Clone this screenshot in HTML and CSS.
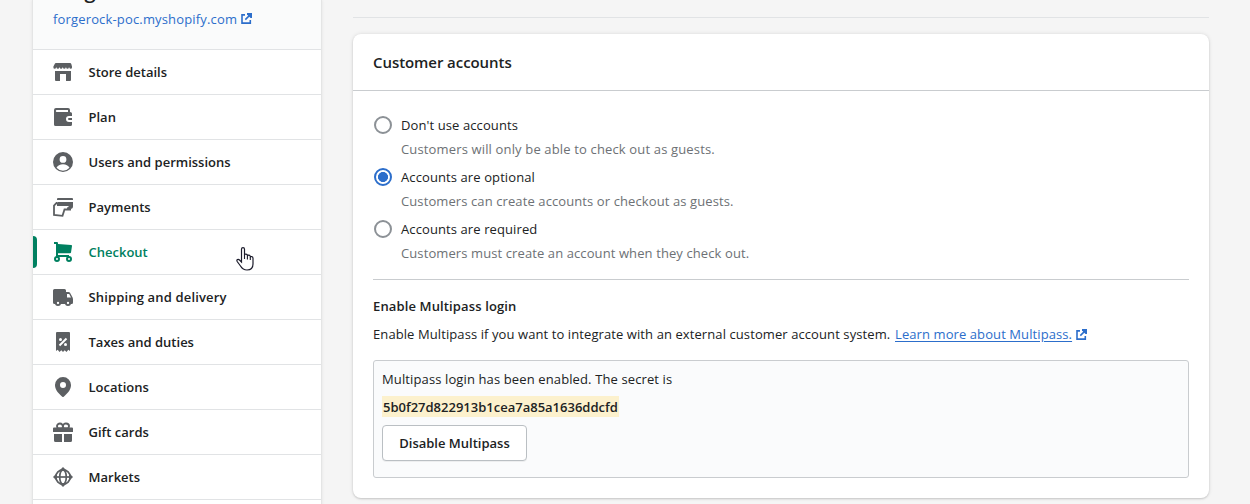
FILE: index.html
```html
<!DOCTYPE html>
<html lang="en">
<head>
<meta charset="utf-8">
<title>Settings - Checkout</title>
<link rel="stylesheet" href="styles.css">
</head>
<body>
<svg class="defs" width="0" height="0">
  <symbol id="external" viewBox="0 0 11 11"><path d="M4 1.900H1v8.200h8.300V7M9.700 1.200 4.300 6.600" fill="none" stroke="currentColor" stroke-width="1.600"/><path d="M6 0h5v5H9.500L6 1.500z" fill="currentColor"/></symbol>
</svg>
<div class="page">
  <aside class="sidebar">
    <header class="store">
      <div class="store-name">Forgerock</div>
      <a class="store-link">forgerock-poc.myshopify.com</a><svg class="external"><use href="#external"/></svg>
    </header>
    <nav class="nav">
      <a class="item"><svg class="icon" viewBox="0 0 20 20"><path d="M3 1h14q1 0 1.300 1L19 4.500v1a1.300 1.300 0 0 1-2.600 0h-.6a1.300 1.300 0 0 1-2.600 0h-.6a1.300 1.300 0 0 1-2.600 0h-.6a1.300 1.300 0 0 1-2.600 0h-.6a1.300 1.300 0 0 1-2.600 0h-.6a1.300 1.300 0 0 1-2.600 0v-1L1.700 2Q2 1 3 1z"/><path d="M2 9h16v9q0 1-1 1h-4v-7H7v7H3q-1 0-1-1z"/></svg><span>Store details</span></a>
      <a class="item"><svg class="icon" viewBox="0 0 20 20"><path fill-rule="evenodd" d="M3 1h12q2 0 2 2v2q2 0 2 1.500V9h-3q-3 0-3 3t3 3h3v2.500q0 1.500-1.500 1.500h-15Q1 19 1 17.500V3q0-2 2-2zM3.800 3a1 1 0 0 0 0 2H15V3z"/><path d="M16 11h3v2h-3a1 1 0 0 1 0-2z"/></svg><span>Plan</span></a>
      <a class="item"><svg class="icon" viewBox="0 0 20 20"><path fill-rule="evenodd" d="M10 0a10 10 0 1 1 0 20 10 10 0 0 1 0-20zm0 4a3.400 3.400 0 1 0 0 6.800A3.400 3.400 0 0 0 10 4zm0 8.300c-3 0-5.300 1.400-6.500 3.500a8.700 8.700 0 0 0 13 0c-1.200-2.100-3.500-3.500-6.500-3.500z"/></svg><span>Users and permissions</span></a>
      <a class="item"><svg class="icon" viewBox="0 0 20 20"><path d="M4 2q0-1 1-1h14q1 0 1 1v1H4zM5 5h15v4.500q0 2-1.500 2.300l-4.500.7v-2l1.500-.5V9H4V6z"/><path d="M4.500 6H3.500L1 8.500V18l8.500.8 2-6.300H18" fill="none" stroke="currentColor" stroke-width="1.800"/></svg><span>Payments</span></a>
      <a class="item active"><svg class="icon" viewBox="0 0 20 20"><path d="M1 0h3q1 0 1 1v1l13.200 1q.9 0 .8 1l-1 6.500q-.1.800-1 .800H5V13h11v2H3V2H1z"/><g fill="none" stroke="currentColor" stroke-width="2"><circle cx="4" cy="17" r="2"/><circle cx="16" cy="17" r="2"/></g></svg><span>Checkout</span></a>
      <a class="item wide"><svg class="icon" viewBox="0 0 20 20"><path fill-rule="evenodd" d="M1.500 2h10Q13 2 13 3.500V5h2.500q1 0 1.500.8l2.600 4.700.4 1.500v3.500q0 1.500-1.300 1.500H1.500Q0 17 0 15.500v-12Q0 2 1.500 2zM14 7v3.500h4L16.200 7z"/><g fill="#fff" stroke="currentColor" stroke-width="1.900"><circle cx="5" cy="16" r="2.100"/><circle cx="15" cy="16" r="2.100"/></g></svg><span>Shipping and delivery</span></a>
      <a class="item"><svg class="icon" viewBox="0 0 20 20"><path d="M4 0h12q1 0 1 1v18l-1.700-1.200L13.500 20l-1.800-1.800L10 20l-1.700-1.800L6.500 20l-1.800-2.200L3 19V1q0-1 1-1z"/><path d="m6.500 13.500 7-7" stroke="#fff" stroke-width="2"/><g fill="#fff"><circle cx="7.500" cy="7.500" r="1.500"/><circle cx="12.500" cy="12.500" r="1.500"/></g></svg><span>Taxes and duties</span></a>
      <a class="item"><svg class="icon" viewBox="0 0 20 20"><path fill-rule="evenodd" d="M10 0a8 8 0 0 1 8 8.200c0 5-4.500 9-7.300 11.500q-.7.500-1.400 0C6.500 17.200 2 13.200 2 8.200A8 8 0 0 1 10 0zm0 5a3 3 0 1 0 0 6 3 3 0 0 0 0-6z"/></svg><span>Locations</span></a>
      <a class="item"><svg class="icon" viewBox="0 0 20 20"><path d="M1 5.500h18q1 0 1 1V10H0V6.500q0-1 1-1zM1 12h8v8H2.500Q1 20 1 18.500zM11 12h8v6.500q0 1.500-1.500 1.500H11z"/><path d="M10 6V4.500M10 5C10 0 4 1 4 4q0 1.500 1 2.500h3.500Q10 6 10 4.500C10 0 16 1 16 4q0 1.500-1 2.500h-3.500Q10 6 10 5" fill="none" stroke="currentColor" stroke-width="1.900"/></svg><span>Gift cards</span></a>
      <a class="item"><svg class="icon" viewBox="0 0 20 20"><g fill="none" stroke="currentColor" stroke-width="1.700"><circle cx="10" cy="10" r="7.200"/><ellipse cx="10" cy="10" rx="3.300" ry="7.200"/><path d="M1 10h18"/></g><path d="m10 0 4 4H6zM10 20l4-4H6zM0 10l4-4v8zM20 10l-4-4v8z"/></svg><span>Markets</span></a>
      <a class="item"></a>
    </nav>
  </aside>
  <main class="main">
    <hr class="divider">
    <section class="card">
      <h2 class="card-title">Customer accounts</h2>
      <div class="card-body">
        <div class="options">
          <label class="option"><span class="radio"></span><span class="label">Don't use accounts</span><span class="help guests">Customers will only be able to check out as guests.</span></label>
          <label class="option"><span class="radio checked"></span><span class="label">Accounts are optional</span><span class="help">Customers can create accounts or checkout as guests.</span></label>
          <label class="option"><span class="radio"></span><span class="label">Accounts are required</span><span class="help">Customers must create an account when they check out.</span></label>
        </div>
        <div class="multipass">
          <h3 class="subheading">Enable Multipass login</h3>
          <p class="intro"><span class="intro-text">Enable Multipass if you want to integrate with an external customer account system.</span><a class="learn">Learn more about Multipass.</a><svg class="external"><use href="#external"/></svg></p>
          <div class="secret-box">
            <p class="secret-text">Multipass login has been enabled. The secret is</p>
            <mark class="secret">5b0f27d822913b1cea7a85a1636ddcfd</mark>
            <button class="button">Disable Multipass</button>
          </div>
        </div>
      </div>
    </section>
  </main>
</div>
<svg class="cursor" viewBox="0 0 18 24"><path d="M5.500 15V2.300c0-2.200 3-2.200 3 0v6c0-1.800 2.900-1.600 2.900.3v.5c.3-1.500 2.900-1.200 2.900.5v.6c.4-1.200 2.700-.8 2.700 1V17c0 4-2.500 6-6 6-3.500 0-5-1.500-6.500-4L1.200 14.500c-1-1.800 1-2.800 2.300-1.500z" fill="#fff" stroke="#1b1b2b" stroke-width="1.200"/><path d="M8.500 8v4M11.400 9v3.500M14.300 10v3" fill="none" stroke="#1b1b2b" stroke-width="1.100"/></svg>
</body>
</html>
```
FILE: styles.css
```css
* { box-sizing: border-box; }
body {
  margin: 0;
  height: 504px;
  overflow: hidden;
  background: #f5f5f5;
  color: #202223;
  font: 400 13px/20px "Open Sans", "Noto Sans", sans-serif;
}
h2, h3, p { margin: 0; }
.defs { position: absolute; }
.page { display: flex; gap: 31px; height: 504px; padding-left: 32px; overflow: hidden; }
.sidebar {
  flex: none;
  width: 290px;
  height: 520px;
  background: #fff;
  border: solid #e4e5e5;
  border-width: 0 1px;
  box-shadow: 0 0 3px rgba(23, 24, 24, .08);
}
.store { display: flow-root; height: 50px; padding-left: 20px; background: #fafbfb; border-bottom: 1px solid #e1e3e5; white-space: nowrap; }
.store-name { height: 28px; margin-top: -19px; font-size: 20px; line-height: 19px; font-weight: 600; }
.store-link { color: #2c6ecb; letter-spacing: .08px; }
.store-link { letter-spacing: .16px; }
.external { width: 11px; height: 11px; margin-left: 4px; color: #2c6ecb; }
.item {
  position: relative;
  display: flex;
  align-items: center;
  gap: 15.5px;
  height: 45px;
  padding-left: 20px;
  border-bottom: 1px solid #e1e3e5;
  font-weight: 600;
}
.wide { letter-spacing: .16px; }
.icon { width: 20px; height: 20px; color: #5c5f62; fill: currentColor; }
.active, .active .icon { color: #008060; }
.active::before {
  content: "";
  position: absolute;
  left: 0;
  top: 6px;
  width: 4px;
  height: 32px;
  border-radius: 0 4px 4px 0;
  background: #008060;
}
.main { width: 856px; padding-top: 17px; }
.divider { height: 1px; margin: 0 0 16px; border: 0; background: #e1e3e5; }
.card { height: 464px; background: #fff; border-radius: 8px; box-shadow: 0 0 4px rgba(23, 24, 24, .1), 0 1px 2px rgba(0, 0, 0, .15); }
.card-title { height: 57px; padding: 17px 20px; border-bottom: 1px solid #c9cccf; font-size: 15px; line-height: 22px; font-weight: 600; letter-spacing: -.07px; }
.card-body { padding: 24px 20px 20px; }
.options { padding-bottom: 12px; border-bottom: 1px solid #c9cccf; white-space: nowrap; }
.option { display: grid; grid-template-columns: 28px 1fr; grid-template-rows: 24px 20px; height: 52px; letter-spacing: .1px; }
.options .option:last-child { height: 48px; }
.radio { width: 18px; height: 18px; margin: 1px; border: 2px solid #8c9196; border-radius: 50%; }
.checked { border-color: #2c6ecb; background: radial-gradient(circle, #2c6ecb 4.700px, #fff 5.300px); }
.label { height: 20px; }
.help { grid-column: 2; color: #6d7175; }
.guests { letter-spacing: .15px; }
.multipass { padding-top: 16px; }
.subheading { font-size: 13px; line-height: 20px; font-weight: 600; letter-spacing: .13px; }
.intro { display: flex; align-items: center; margin-top: 8px; white-space: nowrap; letter-spacing: .09px; }
.intro-text { width: 522px; }
.learn { color: #2c6ecb; text-decoration: underline; text-underline-offset: 2px; }
.secret-box {
  display: flex;
  flex-direction: column;
  align-items: flex-start;
  height: 118px;
  margin-top: 16px;
  padding: 8px;
  background: #fafbfc;
  border: 1px solid #c9cccf;
  border-radius: 3px;
}
.secret-text { letter-spacing: .12px; }
.secret { height: 21px; margin-top: 7px; padding: 1px 1px 0; background: #fcf1cd; color: #202223; line-height: 20px; font-weight: 600; }
.button {
  width: 145px;
  height: 36px;
  margin-top: 8px;
  padding: 0;
  background: #fff;
  color: #202223;
  border: 1px solid #babfc3;
  border-radius: 4px;
  box-shadow: 0 1px 0 rgba(0, 0, 0, .05);
  font: 600 13px/20px "Open Sans", "Noto Sans", sans-serif;
}
.cursor { position: absolute; left: 236px; top: 247px; width: 18px; height: 24px; }
```
